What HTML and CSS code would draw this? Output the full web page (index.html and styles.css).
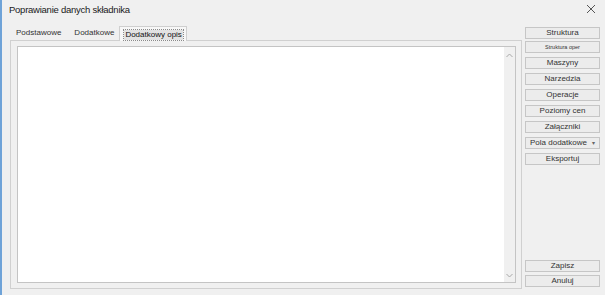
FILE: index.html
```html
<!DOCTYPE html>
<html lang="pl">
<head>
<meta charset="utf-8">
<title>Poprawianie danych składnika</title>
<link rel="stylesheet" href="styles.css">
</head>
<body>
<div class="window">
  <div class="titlebar">
    <span class="title">Poprawianie danych składnika</span>
    <svg class="close" width="10" height="10" viewBox="0 0 10 10"><path d="M1 1L9 9M9 1L1 9" stroke="#555" stroke-width="1" fill="none"/></svg>
  </div>
  <div class="main">
    <div class="tabs-area">
      <div class="tabstrip">
        <span class="tab">Podstawowe</span>
        <span class="tab">Dodatkowe</span>
        <span class="tab active"><span class="focus">Dodatkowy opis</span></span>
      </div>
      <div class="panel">
        <div class="memo">
          <div class="memo-text"></div>
          <div class="scrollbar">
            <svg width="7" height="5" viewBox="0 0 7 5"><path d="M0.5 4L3.5 1L6.5 4" stroke="#a8a8a8" fill="none"/></svg>
            <svg width="7" height="5" viewBox="0 0 7 5"><path d="M0.5 1L3.5 4L6.5 1" stroke="#a8a8a8" fill="none"/></svg>
          </div>
        </div>
      </div>
    </div>
    <div class="sidebar">
      <div class="btn-group top">
        <button class="btn">Struktura</button>
        <button class="btn small">Struktura oper</button>
      </div>
      <div class="btn-group">
        <button class="btn">Maszyny</button>
        <button class="btn">Narzedzia</button>
        <button class="btn">Operacje</button>
        <button class="btn">Poziomy cen</button>
        <button class="btn">Załączniki</button>
        <button class="btn dropdown">Pola dodatkowe <span class="caret">▾</span></button>
        <button class="btn">Eksportuj</button>
      </div>
      <div class="spacer"></div>
      <div class="btn-group bottom">
        <button class="btn">Zapisz</button>
        <button class="btn">Anuluj</button>
      </div>
    </div>
  </div>
</div>
</body>
</html>
```
FILE: styles.css
```css
* { box-sizing: border-box; }
html, body {
  margin: 0;
  padding: 0;
  width: 605px;
  height: 295px;
  overflow: hidden;
  background: #f0f0f0;
  font-family: "Liberation Sans", Arial, sans-serif;
  color: #222;
}
.window {
  width: 605px;
  height: 295px;
  border-left: 2px solid #6fa3d8;
  display: flex;
  flex-direction: column;
}
.titlebar {
  height: 26px;
  display: flex;
  align-items: flex-start;
  justify-content: space-between;
  padding: 3px 7px 0 7px;
}
.title {
  font-size: 9.5px;
  letter-spacing: -0.25px;
  line-height: 14px;
  color: #1a1a1a;
}
.close { margin-top: 1px; margin-right: 2px; }
.main {
  flex: 1;
  display: flex;
  padding-left: 8px;
  padding-bottom: 6px;
}
.tabs-area {
  width: 512px;
  display: flex;
  flex-direction: column;
}
.tabstrip {
  height: 14px;
  display: flex;
  align-items: flex-end;
  padding-left: 6px;
  font-size: 8px;
  color: #333;
}
.tab {
  height: 13px;
  line-height: 12px;
  padding: 0;
  margin-right: 13px;
}
.tab:nth-child(2) { margin-right: 5px; }
.tab.active {
  height: 15px;
  margin-top: -1px;
  margin-bottom: -1px;
  padding: 2px 3px 0 4px;
  border: 1px solid #cfcfcf;
  border-bottom: none;
  background: #f7f7f7;
  position: relative;
  z-index: 1;
}
.focus {
  display: inline-block;
  line-height: 10px;
  padding: 0 1px;
  background: #e2e2e2;
  outline: 1px dotted #8a8a8a;
  color: #111;
}
.panel {
  flex: 1;
  border: 1px solid #d0d0d0;
  padding: 5px 5px 5px 6px;
  display: flex;
}
.memo {
  flex: 1;
  display: flex;
  border: 1px solid #c4c4c4;
  background: #fff;
}
.memo-text { flex: 1; }
.scrollbar {
  width: 11px;
  background: #f0f0f0;
  display: flex;
  flex-direction: column;
  justify-content: space-between;
  align-items: center;
  padding: 6px 0 4px 0;
}
.sidebar {
  width: 75px;
  margin-left: 3px;
  display: flex;
  flex-direction: column;
  padding-top: 1px;
}
.btn-group {
  display: flex;
  flex-direction: column;
  gap: 4px;
}
.btn-group.top { gap: 2px; margin-bottom: 4px; }
.btn-group.bottom { margin-bottom: 2px; gap: 3px; }
.spacer { flex: 1; }
.btn {
  height: 12px;
  margin: 0;
  padding: 0;
  border: 1px solid #c6c6c6;
  background: #ececec;
  font-family: "Liberation Sans", Arial, sans-serif;
  font-size: 8px;
  line-height: 10px;
  color: #333;
  text-align: center;
}
.btn.small { font-size: 5.5px; }
.btn.dropdown { text-align: left; padding-left: 4px; position: relative; }
.caret {
  position: absolute;
  right: 4px;
  top: 0;
  font-size: 6px;
  color: #666;
}
```
